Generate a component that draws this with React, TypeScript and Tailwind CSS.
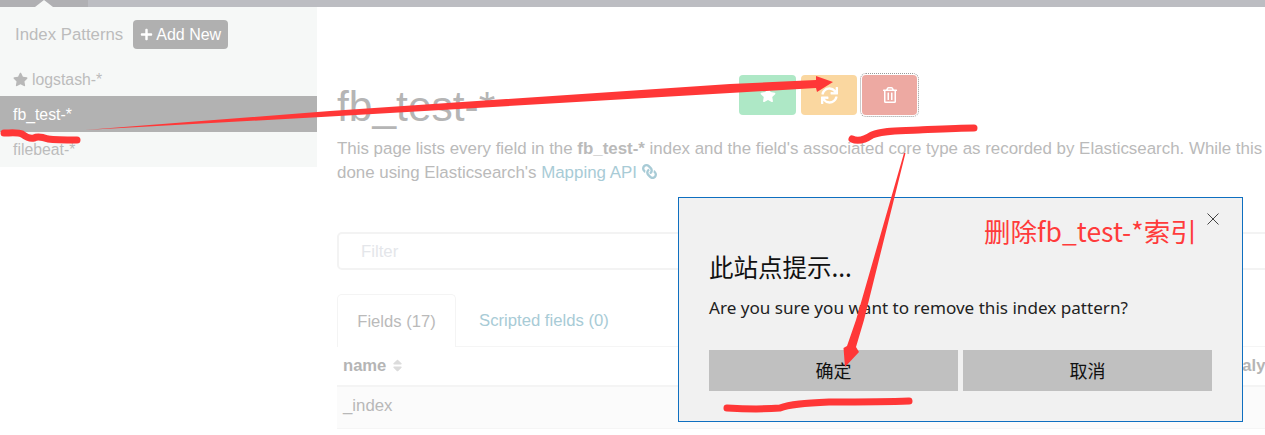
import { FaLink, FaPlus, FaRegTrashAlt, FaSort, FaStar, FaSync } from "react-icons/fa"

const patterns = [
  { name: "logstash-*", star: true },
  { name: "fb_test-*", active: true },
  { name: "filebeat-*" },
]

function Sidebar() {
  return (
    <aside className="w-[317px] h-[160px] shrink-0 bg-[#f6f8f7]">
      <div className="flex items-center h-[56px] pl-[15px] pb-[1px]">
        <span className="text-[16.8px] text-[#bcbcbc]">Index Patterns</span>
        <button
          type="button"
          className="ml-[10px] flex items-center gap-[3px] h-[29px] w-[95px] justify-center rounded-[4px] bg-[#b0b0b0] text-white text-[16px]"
        >
          <FaPlus size={13} />
          Add New
        </button>
      </div>
      {patterns.map((p) => (
        <div
          key={p.name}
          className={
            p.active
              ? "flex items-center h-[36px] pl-[13px] pt-[1px] bg-[#b2b2b2] text-white text-[15.8px]"
              : p.star
                ? "flex items-center h-[33px] pl-[13px] gap-[4px] text-[#bcbcbc] text-[15.8px]"
                : "flex items-center h-[35px] pl-[13px] text-[#bcbcbc] text-[15.8px]"
          }
        >
          {p.star && <FaStar size={15} className="text-[#b8b8b8]" />}
          {p.name}
        </div>
      ))}
    </aside>
  )
}

function Header() {
  return (
    <div className="flex h-[62px]">
      <h1 className="w-[402px] text-[42.5px] leading-[64px] text-[#b5b5b5]">fb_test-*</h1>
      <div className="flex h-[40px] gap-[5px] text-white">
        <button type="button" className="w-[57px] flex items-center justify-center rounded-[4px] bg-[#aee8c6]">
          <FaStar size={16} />
        </button>
        <button type="button" className="w-[56px] flex items-center justify-center rounded-[4px] bg-[#fad7a0]">
          <FaSync size={17} />
        </button>
        <button
          type="button"
          className="w-[55px] flex items-center justify-center rounded-[4px] bg-[#eda9a2] outline-1 outline-dotted outline-offset-[1px] outline-[#999]"
        >
          <FaRegTrashAlt size={16} />
        </button>
      </div>
    </div>
  )
}

function FieldTable() {
  return (
    <div className="w-[1100px]">
      <div className="flex h-[53px] border-b border-[#f5f5f5]">
        <div className="w-[119px] h-[53px] flex items-center justify-center pt-[2px] rounded-t-[5px] border border-b-0 border-[#f4f4f4] bg-white text-[#bababa] text-[16.6px]">
          Fields (17)
        </div>
        <div className="ml-[23px] pt-[2px] flex items-center text-[#a8cbd6] text-[16.7px]">Scripted fields (0)</div>
      </div>
      <div className="flex items-center h-[38px] pl-[6px] text-[16.6px] font-bold text-[#b5b5b5] border-b-2 border-[#f4f4f4] box-content">
        <span className="w-[880px] flex items-center gap-[4px]">
          name
          <FaSort size={15} className="text-[#dcdcdc]" />
        </span>
        <span>analyzed</span>
      </div>
      <div className="flex items-center h-[38px] pl-[6px] pb-[3px] bg-[#fbfbfb] border-b border-[#f5f5f5] text-[16.8px] text-[#b8b8b8] box-content">
        _index
      </div>
    </div>
  )
}

function ConfirmDialog() {
  return (
    <div className="absolute left-[678px] top-[197px] w-[565px] h-[225px] border border-[#0f6fc0] bg-[#f1f1f1] pl-[30px] pr-[29px] [font-family:'Noto_Sans','Noto_Sans_CJK_SC',sans-serif]">
      <span className="absolute left-[305px] top-[15px] text-[26.5px] leading-[36px] text-[#ff3b3b] [font-family:'Noto_Sans_CJK_SC',sans-serif]">
        删除fb_test-*索引
      </span>
      <svg className="absolute left-[527px] top-[14px]" width="14" height="14" viewBox="0 0 14 14">
        <path d="M1.5 1.5 L12.5 12.5 M12.5 1.5 L1.5 12.5" stroke="#444" strokeWidth="1" fill="none" />
      </svg>
      <div className="pt-[51px] text-[24.5px] leading-[36px] text-[#111] [font-family:'Noto_Sans_CJK_SC',sans-serif]">此站点提示...</div>
      <p className="mt-[11px] text-[17.1px] leading-[24px] text-[#222]">Are you sure you want to remove this index pattern?</p>
      <div className="mt-[30px] flex gap-[5px]">
        <button type="button" className="w-[249px] h-[41px] bg-[#c0c0c0] text-[18px] text-[#111] [font-family:'Noto_Sans_CJK_SC',sans-serif]">确定</button>
        <button type="button" className="w-[249px] h-[41px] bg-[#c0c0c0] text-[18px] text-[#111] [font-family:'Noto_Sans_CJK_SC',sans-serif]">取消</button>
      </div>
    </div>
  )
}

// hand drawn red marks on top of the screenshot
function Scribbles() {
  return (
    <svg className="absolute left-0 top-0 pointer-events-none" width="1265" height="435" viewBox="0 0 1265 435">
      <g fill="none" stroke="#ff3737" strokeLinecap="round" strokeLinejoin="round">
        <path d="M4 133 C10 133 18 132 22 134 C26 137 30 139 34 138 C38 136 42 137 48 139 C56 140 68 140 77 140" strokeWidth="7" />
        <path d="M852 139 C858 142 866 139 872 135 C884 130 900 131 919 130 C940 129 958 128 974 128" strokeWidth="7" />
        <path d="M727 408 C745 409 768 409 780 408 C790 404 805 403 829 402 C860 402 885 402 909 401" strokeWidth="7" />
      </g>
      <polygon fill="#ff3737" points="85,130 330,111 730,84 816,80 816,76 833,82 817,92 816,88 730,93 330,116.5" />
      <polygon fill="#ff3737" points="904,153 905.5,153 864,320 856,347 859,352 845,367 843.5,348 847,346 856,320" />
    </svg>
  )
}

export default function App() {
  return (
    <div className="relative w-[1265px] h-[435px] overflow-hidden bg-white [font-family:'Liberation_Sans',Arial,sans-serif]">
      <div className="relative flex h-[7px] bg-[#bcbdc2]">
        <div className="w-[88px] bg-[#b0b0b3]" />
        <div className="absolute left-[35px] top-0 w-0 h-0 border-x-[9px] border-x-transparent border-b-[7px] border-b-[#f6f8f7]" />
      </div>
      <div className="flex">
        <Sidebar />
        <main className="flex-1 min-w-0 overflow-hidden pl-[20px] pt-[68px]">
          <Header />
          <p className="whitespace-nowrap text-[16.9px] leading-[24px] text-[#bababa]">
            This page lists every field in the <b>fb_test-*</b> index and the field's associated core type as recorded by Elasticsearch. While this
            <br />
            done using Elasticsearch's <span className="text-[#a8cbd6]">Mapping API</span>{" "}
            <FaLink size={15} className="inline-block -scale-x-100 text-[#a8cbd6] align-[-1px]" />
          </p>
          <div className="mt-[47px] w-[1000px] h-[38px] flex items-center pl-[22px] pt-[1px] rounded-[5px] border-2 border-[#f3f3f3] text-[16.8px] text-[#e4e6ea]">
            Filter
          </div>
          <div className="mt-[24px]">
            <FieldTable />
          </div>
        </main>
      </div>
      <ConfirmDialog />
      <Scribbles />
    </div>
  )
}
